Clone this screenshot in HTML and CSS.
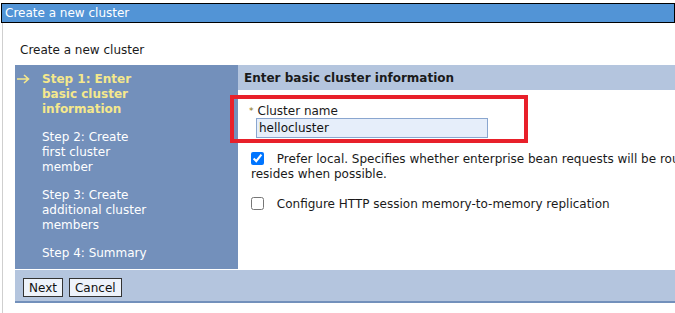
FILE: index.html
```html
<!DOCTYPE html>
<html lang="en">
<head>
  <meta charset="UTF-8">
  <title>Create a new cluster</title>
  <link rel="stylesheet" href="styles.css">
</head>
<body>
<div class="titlebar">Create a new cluster</div>
<div class="page">
  <p class="subtitle">Create a new cluster</p>

  <div class="wizard">
    <ul class="steps">
      <li class="current">
        <svg class="arrow" width="13" height="10" viewBox="0 0 13 10"><path d="M0 5h11.5M7 1l4.5 4L7 9" fill="none" stroke="#f5e88c" stroke-width="1.6"/></svg>
        Step 1: Enter basic cluster information
      </li>
      <li>Step 2: Create first cluster member</li>
      <li>Step 3: Create additional cluster members</li>
      <li>Step 4: Summary</li>
    </ul>

    <div class="panel">
      <h2>Enter basic cluster information</h2>
      <div class="field">
        <label for="name"><span class="req">*</span>Cluster name</label>
        <input type="text" id="name" value="hellocluster">
      </div>
      <div class="check">
        <input type="checkbox" id="prefer" checked>
        <label for="prefer">Prefer local. Specifies whether enterprise bean requests will be routed to the node on which the client<br>resides when possible.</label>
      </div>
      <div class="check">
        <input type="checkbox" id="replicate">
        <label for="replicate">Configure HTTP session memory-to-memory replication</label>
      </div>
    </div>

    <div class="buttons">
      <button type="button">Next</button>
      <button type="button">Cancel</button>
    </div>

    <div class="highlight"></div>
  </div>
</div>
</body>
</html>
```

FILE: styles.css
```css
body {
  margin: 0;
  font-family: 'DejaVu Sans', Verdana, sans-serif;
  font-size: 12px;
  color: #1a1a1a;
  overflow: hidden;
  width: 675px;
  height: 313px;
}
.titlebar {
  margin: 3px 0 0 1px;
  height: 18px;
  line-height: 18px;
  border: 1px solid #000;
  background: #5294d6;
  color: #fff;
  padding-left: 3px;
  width: 669px;
}
.page {
  margin-left: 2px;
  border-left: 1px solid #cfcfcf;
  height: 290px;
  padding-left: 12px;
}
.subtitle {
  margin: 0;
  padding: 20px 0 0 5px;
  height: 22px;
  line-height: 15px;
}

/* wizard layout */
.wizard {
  position: relative;
  display: grid;
  grid-template-columns: 223px 800px;
  grid-template-rows: 204px 34px;
}
.steps {
  list-style: none;
  margin: 0;
  padding: 7px 0 0 27px;
  background: #7390bb;
  color: #fff;
  line-height: 15px;
}
.steps li {
  width: 108px;
  margin-bottom: 13px;
  position: relative;
}
.steps li.current {
  color: #f5e88c;
  font-weight: bold;
}
.steps .arrow {
  position: absolute;
  left: -25px;
  top: 2px;
}
.panel h2 {
  margin: 0;
  height: 25px;
  line-height: 27px;
  background: #b4c5de;
  font-size: 12px;
  padding-left: 6px;
}
.field {
  padding: 14px 0 0 11px;
}
.field label {
  display: block;
  line-height: 14px;
}
.req {
  color: #8a7210;
  font-size: 9px;
  margin-right: 4px;
  vertical-align: 1px;
}
.field input {
  margin: 0 0 0 7px;
  width: 232px;
  height: 20px;
  box-sizing: border-box;
  border: 1px solid #8aa6cf;
  background: #e6eefa;
  font: 12px 'DejaVu Sans', Verdana, sans-serif;
  color: #111;
  padding: 0 2px;
}
.check {
  padding-left: 13px;
  line-height: 15px;
  margin-top: 14px;
}
.check + .check {
  margin-top: 15px;
}
.check input {
  margin: 0 9px 0 0;
  width: 13px;
  height: 13px;
  vertical-align: -2px;
}
.buttons {
  grid-column: 1 / 3;
  background: #b4c5de;
  border-top: 1px solid #fff;
  border-bottom: 2px solid #7390bb;
  padding: 8px 0 0 8px;
  display: flex;
  gap: 6px;
  align-items: flex-start;
}
.buttons button {
  font: 12px 'DejaVu Sans', Verdana, sans-serif;
  color: #111;
  background: #eef3fb;
  border: 1px solid #333;
  height: 19px;
  padding: 0 5px;
}

/* annotation box drawn over the form */
.highlight {
  position: absolute;
  left: 215px;
  top: 30px;
  width: 298px;
  height: 48px;
  border: 4px solid #e8202a;
  box-sizing: border-box;
}
```
